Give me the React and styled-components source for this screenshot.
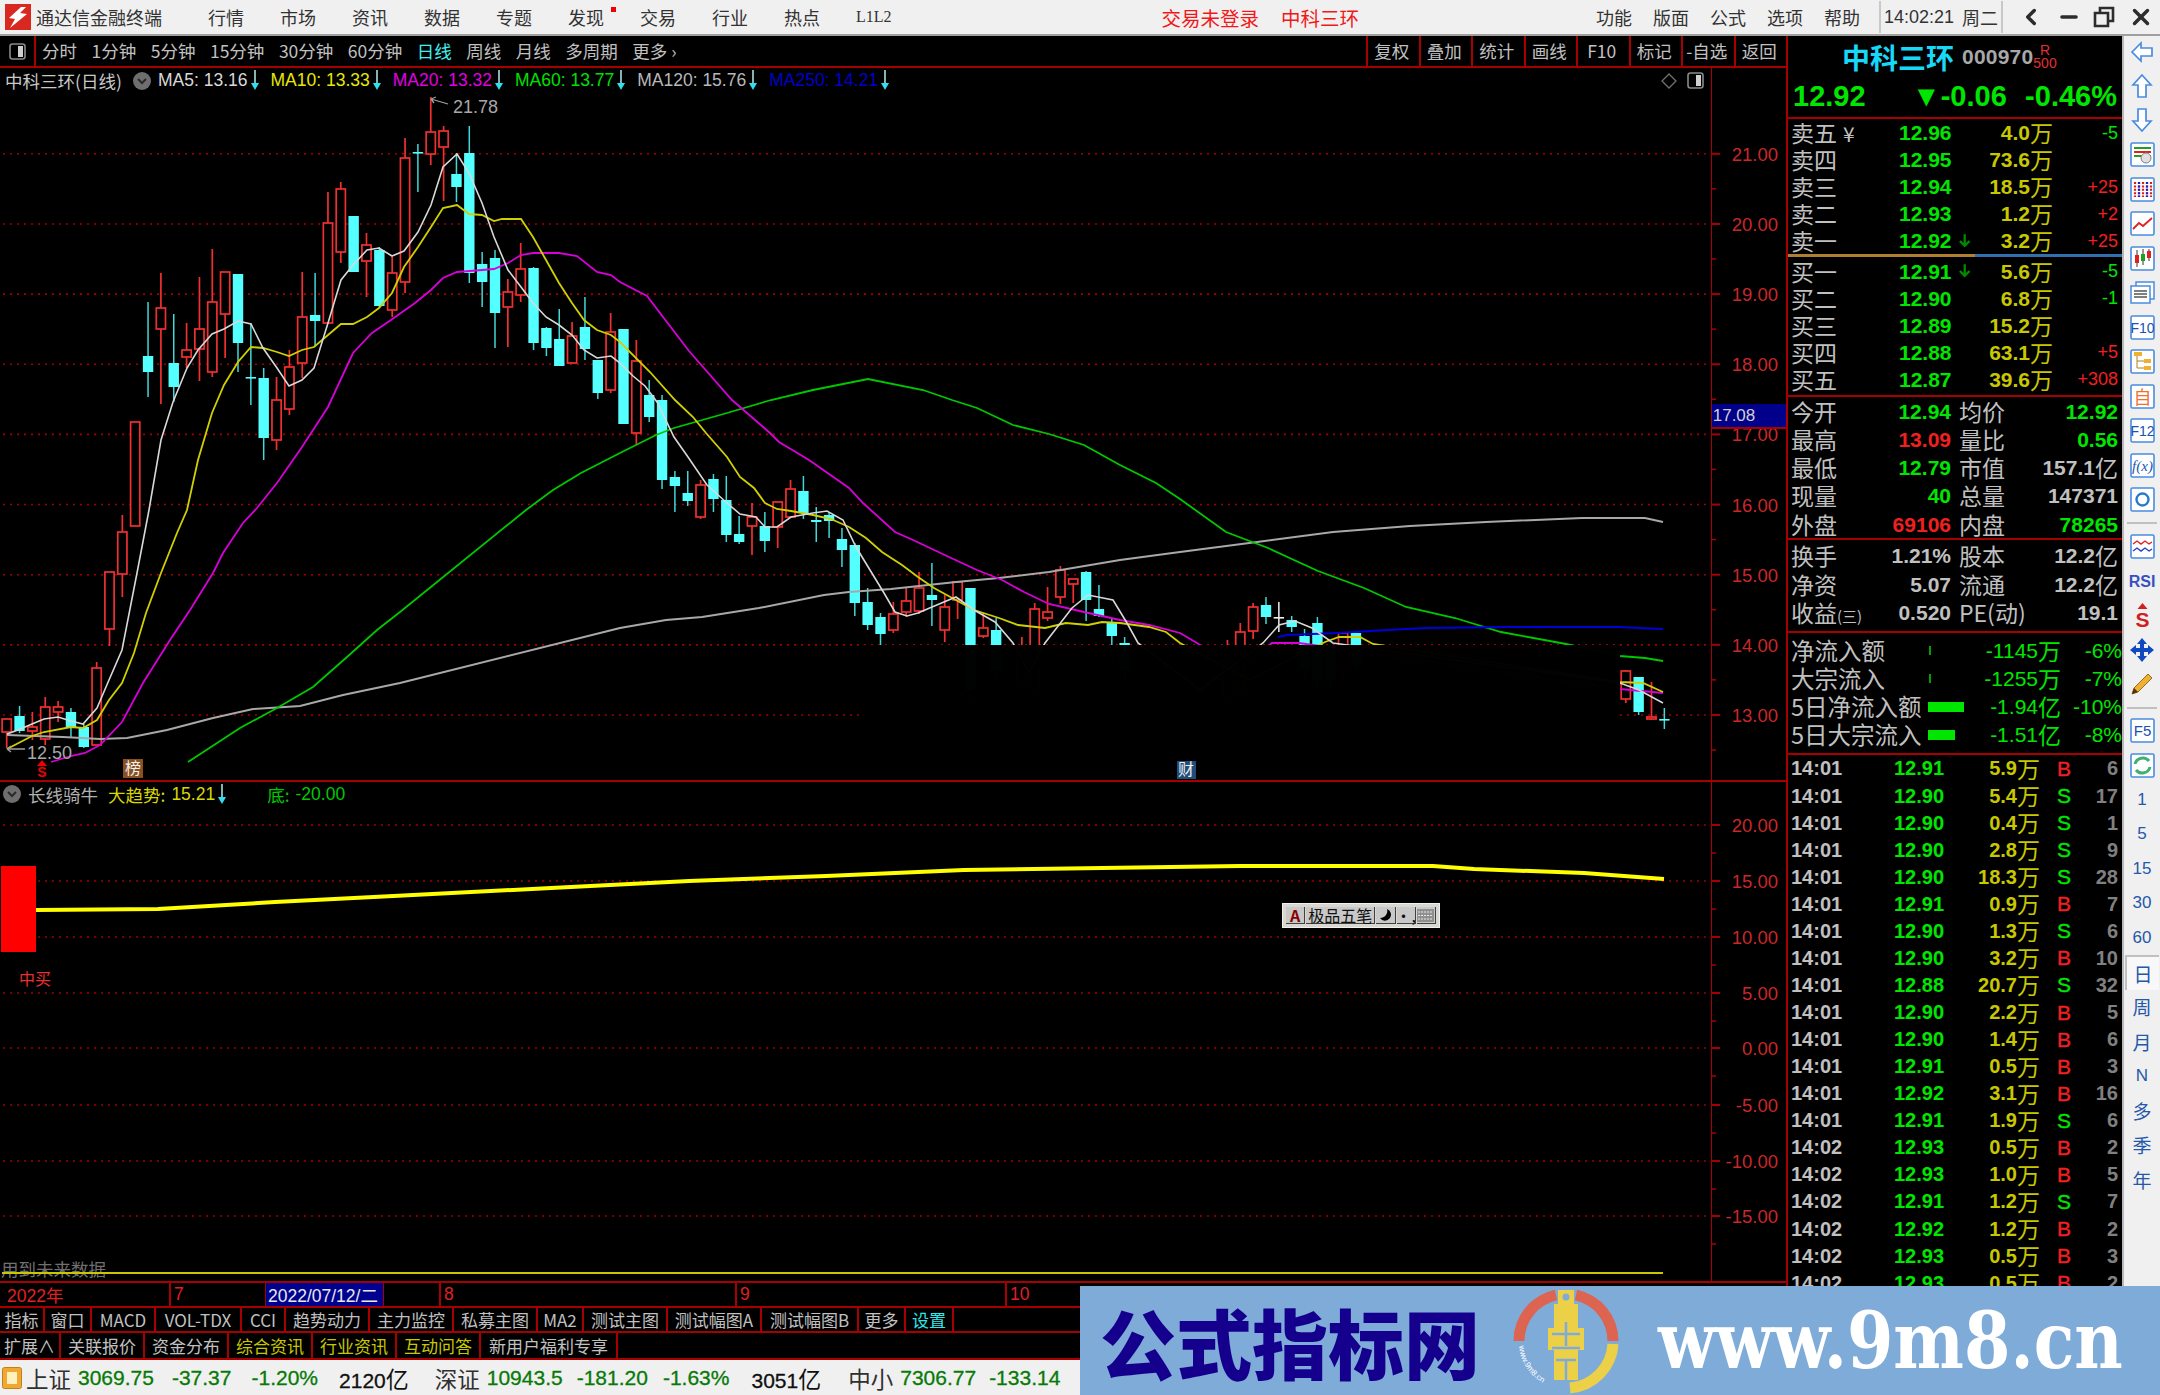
import React from 'react'
import styled, { createGlobalStyle } from 'styled-components'
import { ChevronLeft, Minus, X } from 'lucide-react'

const CJK = `"Noto Sans CJK SC", "Liberation Sans", sans-serif`
const NUM = `"Liberation Sans", "Noto Sans CJK SC", sans-serif`
const RED = '#a80000'
const GREEN = '#00e600'
const GRAY = '#c0c0c0'
const YELLOW = '#c8c800'

// [index, colour, wickTop, bodyTop, bodyBottom, wickBottom]
const candles = [
  [0, 'r', 719, 719, 732, 748], [1, 'c', 706, 716, 731, 733], [2, 'r', 712, 727, 731, 740], [3, 'r', 697, 707, 739, 745],
  [4, 'r', 701, 707, 712, 722], [5, 'c', 708, 712, 727, 738], [6, 'c', 724, 727, 747, 748], [7, 'r', 662, 668, 745, 745],
  [8, 'r', 572, 572, 629, 646], [9, 'r', 515, 532, 574, 597], [10, 'r', 422, 422, 526, 526], [11, 'c', 302, 356, 372, 397],
  [12, 'r', 273, 308, 329, 404], [13, 'c', 314, 363, 387, 402], [14, 'r', 323, 350, 357, 368], [15, 'r', 277, 329, 349, 381],
  [16, 'r', 249, 302, 372, 377], [17, 'r', 272, 272, 314, 358], [18, 'c', 274, 274, 343, 372], [19, 'c', 323, 377, 378, 405],
  [20, 'c', 368, 378, 438, 460], [21, 'r', 377, 400, 440, 450], [22, 'r', 350, 367, 409, 415], [23, 'r', 272, 317, 363, 378],
  [24, 'c', 273, 315, 321, 347], [25, 'r', 192, 223, 323, 323], [26, 'r', 182, 189, 252, 263], [27, 'c', 216, 216, 272, 272],
  [28, 'r', 233, 245, 261, 297], [29, 'c', 247, 250, 306, 307], [30, 'r', 257, 273, 310, 317], [31, 'r', 138, 158, 282, 293],
  [32, 'c', 144, 152, 153, 192], [33, 'r', 97, 132, 154, 165], [34, 'r', 126, 131, 147, 201], [35, 'c', 153, 174, 187, 202],
  [36, 'c', 126, 153, 273, 283], [37, 'c', 252, 264, 282, 307], [38, 'c', 250, 258, 313, 348], [39, 'r', 279, 292, 307, 347],
  [40, 'r', 243, 269, 295, 302], [41, 'c', 267, 268, 343, 350], [42, 'c', 327, 328, 348, 356], [43, 'c', 309, 339, 366, 366],
  [44, 'r', 322, 336, 363, 363], [45, 'c', 297, 327, 349, 360], [46, 'c', 360, 360, 393, 399], [47, 'r', 313, 332, 390, 393],
  [48, 'c', 329, 329, 424, 424], [49, 'r', 340, 361, 433, 445], [50, 'c', 380, 395, 417, 422], [51, 'c', 395, 400, 480, 489],
  [52, 'c', 471, 477, 486, 512], [53, 'c', 471, 493, 501, 506], [54, 'r', 480, 485, 517, 519], [55, 'c', 474, 479, 499, 512],
  [56, 'c', 476, 500, 535, 542], [57, 'c', 516, 534, 542, 544], [58, 'r', 503, 517, 526, 555], [59, 'c', 512, 526, 541, 552],
  [60, 'r', 502, 502, 527, 548], [61, 'r', 480, 489, 517, 517], [62, 'c', 476, 491, 513, 519], [63, 'c', 507, 520, 522, 542],
  [64, 'c', 512, 515, 521, 538], [65, 'c', 528, 539, 550, 567], [66, 'c', 543, 545, 603, 616], [67, 'c', 588, 602, 625, 630],
  [68, 'c', 613, 617, 634, 660], [69, 'r', 602, 614, 630, 633], [70, 'r', 588, 601, 612, 617], [71, 'r', 572, 588, 611, 614],
  [72, 'c', 563, 595, 600, 626], [73, 'r', 595, 607, 630, 642], [74, 'r', 582, 582, 600, 619], [75, 'c', 588, 588, 690, 700],
  [76, 'r', 613, 628, 636, 638], [77, 'c', 618, 630, 670, 680], [79, 'r', 637, 650, 680, 690], [80, 'r', 603, 609, 690, 700],
  [81, 'r', 587, 612, 618, 621], [82, 'r', 566, 570, 597, 604], [83, 'r', 579, 579, 584, 603], [84, 'c', 571, 572, 600, 621],
  [85, 'c', 585, 609, 616, 617], [86, 'c', 618, 622, 636, 660], [87, 'c', 637, 643, 670, 680], [95, 'r', 640, 660, 700, 710],
  [96, 'r', 623, 632, 690, 700], [97, 'r', 603, 607, 631, 639], [98, 'c', 597, 605, 617, 624], [99, 'w', 602, 617, 618, 632],
  [100, 'c', 616, 620, 627, 632], [101, 'c', 629, 636, 670, 680], [102, 'c', 617, 623, 680, 690], [103, 'c', 650, 650, 680, 690],
  [104, 'r', 633, 633, 670, 680], [105, 'c', 633, 633, 665, 675], [126, 'r', 670, 671, 699, 703], [127, 'c', 677, 677, 712, 715],
  [128, 'r', 682, 717, 719, 720], [129, 'c', 708, 719, 720, 729],
]

const ma5 = [[7, 734], [18, 730], [32, 724], [44, 719], [58, 717], [71, 721], [83, 724], [97, 708], [109, 680], [122, 650], [137, 573], [149, 510], [161, 440], [173, 402], [187, 368], [198, 350], [212, 334], [224, 329], [238, 321], [251, 324], [263, 348], [277, 368], [289, 386], [302, 380], [314, 368], [328, 323], [341, 280], [353, 265], [367, 250], [379, 248], [392, 256], [404, 251], [418, 232], [431, 205], [443, 167], [457, 154], [469, 173], [482, 203], [494, 237], [508, 270], [521, 287], [533, 303], [546, 317], [559, 325], [572, 335], [584, 350], [597, 358], [611, 356], [620, 363], [633, 376], [645, 386], [657, 402], [674, 437], [688, 457], [707, 485], [727, 503], [740, 514], [756, 517], [765, 527], [777, 527], [791, 517], [813, 513], [827, 511], [843, 520], [856, 547], [870, 570], [884, 593], [895, 612], [907, 616], [918, 613], [932, 607], [956, 597], [974, 610], [995, 622], [1013, 643], [1029, 672], [1045, 643], [1072, 608], [1088, 595], [1113, 600], [1127, 623], [1138, 643], [1200, 690], [1263, 643], [1279, 625], [1295, 621], [1312, 628], [1333, 643], [1620, 683], [1639, 690], [1663, 703]]
const ma10 = [[7, 749], [32, 736], [44, 732], [71, 727], [83, 728], [97, 720], [109, 700], [122, 683], [134, 653], [146, 613], [161, 573], [177, 533], [187, 510], [198, 460], [212, 413], [224, 385], [238, 362], [251, 347], [263, 348], [277, 352], [289, 356], [302, 350], [314, 347], [328, 335], [341, 324], [353, 324], [367, 317], [379, 308], [392, 293], [404, 267], [418, 247], [431, 227], [443, 208], [457, 205], [469, 214], [482, 215], [494, 221], [502, 219], [521, 219], [533, 237], [546, 260], [559, 283], [572, 303], [584, 320], [597, 330], [611, 335], [620, 342], [650, 372], [675, 400], [693, 417], [706, 433], [727, 457], [740, 477], [754, 488], [765, 503], [777, 509], [791, 511], [813, 515], [831, 519], [849, 527], [866, 538], [882, 552], [902, 565], [918, 577], [934, 588], [954, 599], [974, 610], [999, 618], [1018, 625], [1045, 628], [1066, 623], [1088, 625], [1102, 622], [1120, 623], [1149, 627], [1166, 632], [1180, 643], [1250, 680], [1325, 642], [1339, 637], [1360, 637], [1373, 644], [1620, 682], [1643, 683], [1663, 692]]
const ma20 = [[51, 762], [71, 756], [85, 753], [100, 745], [122, 722], [143, 683], [170, 640], [190, 610], [213, 573], [223, 553], [243, 523], [257, 508], [277, 483], [302, 447], [328, 407], [353, 353], [372, 333], [391, 320], [415, 303], [431, 290], [443, 278], [457, 272], [482, 270], [494, 269], [508, 263], [521, 255], [533, 253], [559, 253], [577, 256], [597, 272], [611, 275], [620, 282], [647, 296], [689, 351], [732, 400], [770, 433], [779, 442], [809, 460], [849, 488], [863, 503], [895, 532], [913, 540], [949, 557], [977, 570], [1002, 580], [1024, 592], [1049, 604], [1084, 612], [1120, 620], [1149, 625], [1180, 633], [1197, 643], [1235, 670], [1272, 643], [1299, 643], [1620, 689], [1663, 693]]
const ma60 = [[188, 762], [240, 728], [277, 708], [313, 687], [347, 657], [377, 630], [400, 612], [526, 510], [553, 490], [581, 473], [620, 453], [656, 435], [674, 428], [727, 413], [771, 400], [813, 390], [868, 379], [923, 390], [952, 400], [977, 408], [1013, 425], [1049, 434], [1084, 445], [1120, 465], [1156, 483], [1180, 499], [1226, 532], [1268, 548], [1318, 571], [1364, 588], [1406, 607], [1455, 618], [1501, 632], [1566, 644], [1620, 656], [1645, 658], [1663, 661]]
const ma120 = [[7, 735], [63, 737], [100, 739], [127, 738], [167, 730], [213, 718], [253, 709], [300, 706], [343, 695], [400, 683], [620, 628], [666, 620], [702, 617], [759, 608], [824, 595], [849, 592], [891, 589], [956, 582], [999, 578], [1049, 572], [1120, 560], [1180, 552], [1257, 542], [1333, 532], [1410, 526], [1486, 522], [1582, 518], [1645, 518], [1663, 522]]
const ma250 = [[1278, 637], [1287, 635], [1337, 633], [1387, 630], [1427, 628], [1505, 627], [1618, 627], [1663, 629]]
const trend = [[36, 910], [158, 909], [275, 902], [413, 895], [551, 888], [689, 881], [826, 876], [964, 870], [1102, 868], [1240, 866], [1433, 866], [1474, 869], [1584, 873], [1664, 879]]

const priceTicks = [21, 20, 19, 18, 17, 16, 15, 14, 13]
const priceY = p => 715 - (p - 13) * 70.15
const lowerTicks = [['20.00', 825], ['15.00', 881], ['10.00', 937], ['5.00', 993], ['0.00', 1048], ['-5.00', 1105], ['-10.00', 1161], ['-15.00', 1216]]

const GlobalStyle = createGlobalStyle`
  html, body { margin: 0; padding: 0; background: #000; }
  * { box-sizing: border-box; }
`

const SPage = styled.div`
  position: relative;
  width: 2160px;
  height: 1395px;
  overflow: hidden;
  display: flex;
  flex-direction: column;
  background: #000;
  font-family: ${CJK};
`

/* title bar */
const STitleBar = styled.div`
  height: 36px;
  flex: none;
  display: flex;
  align-items: center;
  background: #f0f0f0;
  border-bottom: 2px solid #a0a0a0;
  color: #333;
  font-size: 18px;
`
const SLogo = styled.svg`
  width: 26px;
  height: 26px;
  margin: 0 5px 0 5px;
  flex: none;
`
const SAppName = styled.div`
  width: 172px;
`
const SMenu = styled.div`
  display: flex;
  align-items: center;
  gap: ${p => p.$gap}px;
  margin-right: ${p => p.$mr || 0}px;
  margin-left: ${p => (p.$auto ? 'auto' : '0')};
`
const SMenuItem = styled.span`
  position: relative;
  white-space: nowrap;
  font-family: ${p => (p.$mono ? '"Liberation Serif", serif' : CJK)};
  font-size: ${p => (p.$mono ? 16 : 18)}px;
`
const SDot = styled.i`
  position: absolute;
  right: -12px;
  top: 3px;
  width: 5px;
  height: 5px;
  background: #f00000;
`
const SAlert = styled.div`
  margin-left: ${p => p.$ml}px;
  color: #f01818;
  font-size: 19.5px;
  white-space: nowrap;
`
const SClock = styled.div`
  width: 124px;
  height: 32px;
  display: flex;
  align-items: center;
  justify-content: space-between;
  padding: 0 3px;
  border-left: 2px solid #c8c8c8;
  border-right: 2px solid #c8c8c8;
  font-size: 18px;
  font-family: ${NUM};
`
const SWinButtons = styled.div`
  width: 157px;
  display: flex;
  align-items: center;
  justify-content: space-between;
  padding: 0 6px 0 15px;
  color: #2c2c2c;
`

/* main body */
const SBody = styled.div`
  height: 1324px;
  flex: none;
  display: flex;
`
const SLeftColumn = styled.div`
  width: 1786px;
  flex: none;
  display: flex;
  flex-direction: column;
`
const SToolbar = styled.div`
  height: 32px;
  flex: none;
  display: flex;
  align-items: center;
  border-bottom: 2px solid ${RED};
  color: ${GRAY};
  font-size: 17.5px;
`
const SPaneToggle = styled.div`
  width: 36px;
  height: 100%;
  display: flex;
  align-items: center;
  justify-content: center;
  border-right: 2px solid ${RED};
`
const SPeriods = styled.div`
  display: flex;
  gap: 14.5px;
  margin: 0 0 2px 6px;
`
const SPeriod = styled.span`
  color: ${p => (p.$active ? '#40f0f0' : GRAY)};
  white-space: nowrap;
`
const SToolButtons = styled.div`
  margin-left: auto;
  display: flex;
  height: 100%;
`
const SToolButton = styled.div`
  width: 52.5px;
  display: flex;
  align-items: center;
  justify-content: center;
  padding: 0 3px 2px 0;
  border-left: 2px solid ${RED};
  font-size: 17.5px;
`
const SPricePane = styled.div`
  height: 714px;
  flex: none;
  display: flex;
  border-bottom: 2px solid ${RED};
`
const SLowerPane = styled.div`
  height: 501px;
  flex: none;
  display: flex;
  border-bottom: 2px solid ${RED};
`
const SChartColumn = styled.div`
  width: 1711px;
  flex: none;
  display: flex;
  flex-direction: column;
`
const SChart = styled.svg`
  display: block;
  width: 1711px;
  flex: none;
`
const SAxis = styled.svg`
  display: block;
  width: 75px;
  flex: none;
`
const SLegend = styled.div`
  height: 25px;
  flex: none;
  display: flex;
  align-items: center;
  padding-left: 5px;
  font-family: ${NUM};
  font-size: 17.5px;
`
const SLegendTitle = styled.span`
  width: 128px;
  color: #c8c8c8;
  font-family: ${CJK};
  white-space: nowrap;
`
const SLegendToggle = styled.span`
  display: flex;
  margin-right: 7px;
`
const SLegendValue = styled.span`
  display: inline-flex;
  align-items: center;
  gap: 2px;
  margin-right: ${p => p.$mr || 11}px;
  color: ${p => p.$color};
  white-space: nowrap;
`
const SValueName = styled.span`
  font-family: ${CJK};
  font-size: 17.5px;
  margin-right: 4px;
`
const SLegendEnd = styled.div`
  margin-left: auto;
  display: flex;
  align-items: center;
  gap: 10px;
  padding-right: 7px;
`
const SLowerHeader = styled(SLegend)`
  height: 24px;
  padding-left: 3px;
  gap: 7px;
`
const SLowerName = styled.span`
  margin-right: 3px;
  color: #b0b0b0;
  font-family: ${CJK};
`
const SDateAxis = styled.div`
  height: 23px;
  flex: none;
  display: flex;
  font-size: 17.5px;
  font-family: ${NUM};
`
const SDateCell = styled.div`
  width: ${p => p.$w}px;
  display: flex;
  align-items: center;
  padding-left: ${p => p.$pl || 3}px;
  border-right: 2px solid ${p => (p.$line ? RED : 'transparent')};
  background: ${p => (p.$box ? '#000090' : 'transparent')};
  color: ${p => (p.$box ? '#e8e8e8' : '#e02020')};
  outline: ${p => (p.$box ? `1px solid ${RED}` : 'none')};
  white-space: nowrap;
`
const STabRow = styled.div`
  height: ${p => p.$h}px;
  flex: none;
  display: flex;
  border-top: 2px solid ${RED};
  border-bottom: ${p => (p.$last ? `2px solid ${RED}` : 'none')};
`
const STab = styled.div`
  width: ${p => p.$w}px;
  flex: none;
  display: flex;
  align-items: center;
  justify-content: center;
  border-right: 2px solid ${RED};
  color: ${p => p.$color || GRAY};
  font-size: 17px;
  white-space: nowrap;
`

/* quote panel */
const SPanel = styled.div`
  width: 336px;
  flex: none;
  overflow: hidden;
  border-left: 2px solid ${RED};
  color: ${GRAY};
`
const SSection = styled.div`
  border-bottom: 2px solid ${RED};
  padding-top: ${p => p.$pt || 0}px;
  padding-bottom: ${p => p.$pb || 0}px;
`
const SHead = styled.div`
  height: 83px;
  border-bottom: 2px solid ${RED};
`
const SNameRow = styled.div`
  height: 42px;
  display: flex;
  align-items: center;
  padding-left: 54px;
`
const SStockName = styled.span`
  width: 120px;
  color: #18d8f8;
  font-size: 28px;
  font-weight: 700;
  white-space: nowrap;
`
const SStockCode = styled.span`
  width: 71px;
  color: #a8a8a8;
  font-family: ${NUM};
  font-size: 21px;
  font-weight: 700;
  letter-spacing: 0.2px;
`
const SIndexTag = styled.span`
  display: flex;
  flex-direction: column;
  align-items: center;
  color: #e03030;
  font-family: ${NUM};
  font-size: 14px;
  line-height: 13px;
  width: 24px;
`
const SPriceRow = styled.div`
  height: 37px;
  display: grid;
  grid-template-columns: 119px 90px 115px;
  align-items: center;
  padding-left: 5px;
  color: ${GREEN};
  font-family: ${NUM};
  font-size: 29px;
  font-weight: 700;
`
const SChange = styled.span`
  text-align: right;
  white-space: nowrap;
`
const SBookRow = styled.div`
  height: 27.1px;
  display: grid;
  grid-template-columns: 108px 72px 82px 65px;
  align-items: center;
  padding-left: 3px;
`
const SLabel = styled.span`
  color: ${GRAY};
  font-family: ${CJK};
  font-size: ${p => p.$size || 23}px;
  line-height: 1;
  white-space: nowrap;
`
const SLabelSmall = styled.span`
  font-size: 15px;
`
const SYuan = styled.span`
  margin-left: 6px;
  font-size: 21px;
`
const SNum = styled.span`
  display: flex;
  align-items: center;
  justify-content: ${p => (p.$right ? 'flex-end' : 'flex-start')};
  color: ${p => p.$color || GRAY};
  font-family: ${NUM};
  font-size: ${p => p.$size || 21}px;
  font-weight: ${p => p.$weight || 700};
  line-height: 1;
  white-space: nowrap;
`
const SUnit = styled.span`
  font-family: ${CJK};
  font-size: 23px;
  font-weight: 400;
  line-height: 1;
`
const SMiniArrow = styled.svg`
  margin-left: 6px;
  width: 14px;
  height: 16px;
`
const SBookDivider = styled.div`
  height: 3px;
  background: linear-gradient(to right, #b08030 0, #b08030 187px, #3070b0 187px, #3070b0 100%);
`
const SStatRow = styled.div`
  height: ${p => p.$h}px;
  display: grid;
  grid-template-columns: 160px 159px;
  column-gap: 8px;
  align-items: center;
  padding-left: 3px;
`
const SStatCell = styled.div`
  display: flex;
  align-items: center;
  justify-content: space-between;
`
const SFlowRow = styled.div`
  height: 28px;
  display: grid;
  grid-template-columns: 137px 46px 87px 61px;
  align-items: center;
  padding-left: 3px;
`
const SFlowBar = styled.div`
  height: ${p => (p.$w > 2 ? 10 : 9)}px;
  width: ${p => p.$w}px;
  background: ${p => (p.$w > 2 ? '#00e600' : '#00a000')};
  margin-left: ${p => (p.$w > 2 ? 0 : 1)}px;
`
const STickRow = styled.div`
  height: 27.07px;
  display: grid;
  grid-template-columns: 103px 70px 76px 48px 30px;
  align-items: center;
  padding-left: 3px;
`
const SSide = styled.span`
  text-align: center;
  color: ${p => (p.$buy ? '#f02020' : GREEN)};
  font-family: ${NUM};
  font-size: 21px;
  line-height: 1;
  -webkit-text-stroke: 0.4px currentColor;
`

/* right icon strip */
const SSideBar = styled.div`
  flex: 1;
  display: flex;
  flex-direction: column;
  align-items: center;
  background: #f0f0f0;
  border-left: 2px solid #b8b8b8;
  color: #2558a8;
`
const SSideItem = styled.div`
  flex: none;
  width: 100%;
  height: 34.5px;
  display: flex;
  align-items: center;
  justify-content: center;
  font-family: ${NUM};
  font-size: ${p => (p.$cjk ? 19 : 17)}px;
  &:first-child { height: 32.5px; }
`
const SSidePressed = styled(SSideItem)`
  width: 34px;
  background: #f8f8f8;
  border-top: 2px solid #c0c0c0;
  border-left: 2px solid #c0c0c0;
`
const SSideRule = styled.div`
  flex: none;
  width: 30px;
  height: 12px;
  display: flex;
  align-items: center;
  &::after { content: ''; width: 100%; height: 2px; background: #c0c0c0; }
`

/* status bar */
const SStatusBar = styled.div`
  height: 35px;
  flex: none;
  display: flex;
  align-items: center;
  background: #f0f0f0;
  padding-left: 2px;
  font-family: ${NUM};
  font-size: 21px;
`
const SStatusIcon = styled.svg`
  width: 20px;
  height: 22px;
  flex: none;
`
const SStatusName = styled.span`
  margin-left: ${p => p.$ml}px;
  margin-right: 7px;
  color: #303030;
  font-family: ${CJK};
  font-size: 22.5px;
  white-space: nowrap;
`
const SStatusValue = styled.span`
  margin-left: ${p => p.$ml || 0}px;
  color: ${p => p.$color || '#087a08'};
  white-space: nowrap;
  -webkit-text-stroke: 0.3px currentColor;
`
const SStatusUnit = styled.span`
  font-family: ${CJK};
  font-size: 23px;
  -webkit-text-stroke: 0;
`

/* things lying over the page */
const SImeBar = styled.div`
  position: absolute;
  left: 1282px;
  top: 903px;
  width: 158px;
  height: 25px;
  display: flex;
  gap: 1px;
  padding: 3px;
  background: #d8d8d0;
  border: 1px solid #f0f0f0;
  color: #101010;
  font-size: 16px;
`
const SImeKey = styled.div`
  width: ${p => p.$w}px;
  display: flex;
  align-items: center;
  justify-content: center;
  background: #c8c8c8;
  border-right: 1px solid #404040;
  border-bottom: 1px solid #404040;
  color: ${p => p.$color || '#101010'};
  font-weight: ${p => (p.$bold ? 700 : 400)};
  white-space: nowrap;
`
const SBanner = styled.div`
  position: absolute;
  left: 1080px;
  top: 1286px;
  width: 1080px;
  height: 109px;
  display: flex;
  align-items: center;
  background: #7fabd9;
`
const SBannerTitle = styled.div`
  width: 433px;
  flex: none;
  padding-left: 20px;
  color: #14008c;
  font-size: 76px;
  font-weight: 900;
  line-height: 1;
  white-space: nowrap;
`
const SBannerLogo = styled.svg`
  width: 106px;
  height: 106px;
  flex: none;
`
const SBannerUrl = styled.div`
  margin-left: 39px;
  flex: none;
  color: #fff;
  font-family: "DejaVu Serif", serif;
  font-size: 79px;
  font-weight: 700;
  line-height: 1;
  white-space: nowrap;
  transform: scaleX(0.845);
  transform-origin: left center;
`

const pts = arr => arr.map(p => p.join(',')).join(' ')
const cx = i => 6.7 + 12.85 * i

const Arrow = () => (
  <svg width="10" height="21" viewBox="0 0 10 21">
    <path d="M5 0V15" stroke="#c0ffff" strokeWidth="1.4" />
    <path d="M1 13H9L5 20Z" fill="#30e0f0" />
  </svg>
)

const MiniArrow = () => (
  <SMiniArrow viewBox="0 0 14 16">
    <path d="M7 1V12M2 8L7 13L12 8" stroke="#008a00" strokeWidth="2.4" fill="none" />
  </SMiniArrow>
)

const Chevron = () => (
  <svg width="18" height="18" viewBox="0 0 18 18">
    <circle cx="9" cy="9" r="9" fill="#6e6e6e" />
    <path d="M5 7L9 11L13 7" stroke="#2a2a2a" strokeWidth="2" fill="none" />
  </svg>
)

const PanelGlyph = () => (
  <svg width="17" height="17" viewBox="0 0 17 17">
    <rect x="1" y="1" width="15" height="15" rx="2.5" fill="none" stroke="#8a8a8a" strokeWidth="1.6" />
    <rect x="9" y="3" width="5" height="11" fill="#d0d0d0" />
  </svg>
)

const Candle = ({ i, kind, wt, bt, bb, wb }) => {
  const x = cx(i)
  if (kind === 'r') {
    return (
      <g stroke="#f03030" strokeWidth="1.7" fill="#000">
        <path d={`M${x} ${wt}V${bt}M${x} ${bb}V${wb}`} />
        <rect x={x - 4.6} y={bt} width="9.2" height={Math.max(bb - bt, 1.5)} />
      </g>
    )
  }
  const colour = kind === 'w' ? '#f0f0f0' : '#54ffff'
  return (
    <g>
      <path d={`M${x} ${wt}V${wb}`} stroke={kind === 'w' ? colour : '#40d8d8'} strokeWidth="1.5" />
      <rect x={x - 5.2} y={bt} width="10.4" height={Math.max(bb - bt, 1.6)} fill={colour} />
    </g>
  )
}

const PriceChart = () => (
  <SChart viewBox="0 93 1711 687" height="687">
    {priceTicks.map(p => (
      <path key={p} d={`M3 ${priceY(p)}H1711`} stroke="#a00000" strokeWidth="1.6" strokeDasharray="2 5" />
    ))}
    {candles.map(([i, kind, wt, bt, bb, wb]) => (
      <Candle key={i} i={i} kind={kind} wt={wt} bt={bt} bb={bb} wb={wb} />
    ))}
    <polyline points={pts(ma120)} fill="none" stroke="#a8a8a8" strokeWidth="2" />
    <polyline points={pts(ma60)} fill="none" stroke="#00c800" strokeWidth="1.8" />
    <polyline points={pts(ma250)} fill="none" stroke="#0000d8" strokeWidth="2" />
    <polyline points={pts(ma20)} fill="none" stroke="#d800d8" strokeWidth="1.8" />
    <polyline points={pts(ma10)} fill="none" stroke="#d0d000" strokeWidth="1.8" />
    <polyline points={pts(ma5)} fill="none" stroke="#d8d8d8" strokeWidth="1.6" />
    {/* the middle of the chart is blacked out below 14.00 */}
    <rect x="860" y="645" width="760" height="135" fill="#000" fillOpacity="0.99" />
    <path d="M431 99L448 104M431 99l5 -2M431 99l3 4" stroke="#a0a0a0" strokeWidth="1.3" fill="none" />
    <text x="453" y="113" fill="#a8a8a8" fontFamily={NUM} fontSize="18">21.78</text>
    <path d="M7 749H25M7 749l4 -3M7 749l4 3" stroke="#a0a0a0" strokeWidth="1.3" fill="none" />
    <text x="27" y="759" fill="#a8a8a8" fontFamily={NUM} fontSize="18">12.50</text>
    <path d="M42 760l-5 6h10z" fill="#f00000" />
    <text x="42" y="777" fill="#f00000" fontFamily={NUM} fontSize="14" fontWeight="700" textAnchor="middle">S</text>
    <rect x="123" y="759" width="20" height="19" fill="#8a5020" />
    <text x="133" y="774" fill="#f0f0f0" fontFamily={CJK} fontSize="16" textAnchor="middle">榜</text>
    <rect x="1177" y="761" width="19" height="18" fill="#204c78" />
    <text x="1186" y="775" fill="#f0f0f0" fontFamily={CJK} fontSize="16" textAnchor="middle">财</text>
  </SChart>
)

const PriceAxis = () => (
  <SAxis viewBox="1711 68 75 712" height="712">
    <path d="M1711 68V780" stroke={RED} strokeWidth="2" />
    {priceTicks.map(p => (
      <g key={p}>
        <path d={`M1711 ${priceY(p)}H1720`} stroke={RED} strokeWidth="2" />
        <path d={`M1711 ${priceY(p) + 35}H1716`} stroke={RED} strokeWidth="1.5" />
        <text x="1778" y={priceY(p) + 7} textAnchor="end" fill="#c82828" fontFamily={NUM} fontSize="18.5">{p}.00</text>
      </g>
    ))}
    <rect x="1712" y="404" width="74" height="23" fill="#00008a" />
    <path d="M1712 428H1786" stroke={RED} strokeWidth="2" />
    <text x="1734" y="421" textAnchor="middle" fill="#d0d0d0" fontFamily={NUM} fontSize="17">17.08</text>
  </SAxis>
)

const LowerChart = () => (
  <SChart viewBox="0 806 1711 475" height="475">
    {lowerTicks.map(([label, y]) => (
      <path key={label} d={`M3 ${y}H1711`} stroke="#a00000" strokeWidth="1.6" strokeDasharray="2 5" />
    ))}
    <rect x="1" y="866" width="35" height="86" fill="#ff0000" />
    <polyline points={pts(trend)} fill="none" stroke="#ffff00" strokeWidth="4" />
    <text x="35" y="985" textAnchor="middle" fill="#e83030" fontFamily={CJK} fontSize="16">中买</text>
    <text x="1" y="1276" fill="#707070" fontFamily={CJK} fontSize="17.5">用到未来数据</text>
    <path d="M2 1273H1663" stroke="#c8c800" strokeWidth="2" />
  </SChart>
)

const LowerAxis = () => (
  <SAxis viewBox="1711 782 75 499" height="499">
    <path d="M1711 782V1281" stroke={RED} strokeWidth="2" />
    {lowerTicks.map(([label, y]) => (
      <g key={label}>
        <path d={`M1711 ${y}H1720`} stroke={RED} strokeWidth="2" />
        <path d={`M1711 ${y + 28}H1716`} stroke={RED} strokeWidth="1.5" />
        <text x="1778" y={y + 7} textAnchor="end" fill="#c82828" fontFamily={NUM} fontSize="18.5">{label}</text>
      </g>
    ))}
  </SAxis>
)

const Frame = ({ children }) => (
  <svg width="25" height="25" viewBox="0 0 25 25">
    <rect x="1" y="1" width="23" height="23" rx="1.5" fill="#fff" stroke="#4a8ce0" strokeWidth="1.6" />
    {children}
  </svg>
)
const Bars = ({ colour, y }) => <path d={`M4 ${y}h17`} stroke={colour} strokeWidth="2" />

const sideIcons = [
  <svg width="24" height="24" viewBox="0 0 24 24"><path d="M2 12L11 3V8H22V16H11V21Z" fill="#fff" stroke="#4a8ce0" strokeWidth="1.7" /></svg>,
  <svg width="24" height="24" viewBox="0 0 24 24"><path d="M12 1L21 11H16V23H8V11H3Z" fill="#fff" stroke="#4a8ce0" strokeWidth="1.7" /></svg>,
  <svg width="24" height="24" viewBox="0 0 24 24"><path d="M12 23L21 13H16V1H8V13H3Z" fill="#fff" stroke="#4a8ce0" strokeWidth="1.7" /></svg>,
  <Frame><Bars colour="#20a020" y="6" /><Bars colour="#e02020" y="10" /><Bars colour="#20a020" y="14" /><circle cx="16" cy="16" r="5" fill="#e0e0e0" stroke="#808080" /></Frame>,
  <Frame><path d="M5 5v15M9 5v15M13 5v15M17 5v15M21 5v15" stroke="#d02020" strokeWidth="2.2" strokeDasharray="2 1.4" /><path d="M9 5v15M17 5v15" stroke="#2020c0" strokeWidth="2.2" strokeDasharray="2 1.4" /></Frame>,
  <Frame><path d="M3 18L9 12L13 15L22 7" stroke="#e02020" strokeWidth="1.8" fill="none" /></Frame>,
  <Frame><path d="M7 4V21M13 3V19M19 3V15" stroke="#333" /><rect x="5" y="9" width="4" height="8" fill="#e02020" /><rect x="11" y="8" width="4" height="7" fill="#20a020" /><rect x="17" y="5" width="4" height="7" fill="#e02020" /></Frame>,
  <svg width="25" height="25" viewBox="0 0 25 25"><rect x="6" y="2" width="18" height="17" fill="#fff" stroke="#4a8ce0" strokeWidth="1.5" /><rect x="1" y="6" width="19" height="17" fill="#fff" stroke="#4a8ce0" strokeWidth="1.5" /><path d="M4 11h13M4 14h13M4 17h13" stroke="#555" strokeWidth="1.5" /></svg>,
  <Frame><text x="12.5" y="18" textAnchor="middle" fill="#2050b0" fontFamily={NUM} fontSize="14">F10</text></Frame>,
  <Frame><path d="M7 5V19H15M7 12H15" stroke="#b08020" fill="none" /><rect x="4" y="3" width="8" height="4" fill="#f0b030" /><rect x="14" y="10" width="7" height="4" fill="#f0b030" /><rect x="14" y="17" width="7" height="4" fill="#f0b030" /></Frame>,
  <Frame><text x="12.5" y="20" textAnchor="middle" fill="#f07030" fontFamily={CJK} fontSize="18">自</text></Frame>,
  <Frame><text x="12.5" y="18" textAnchor="middle" fill="#2050b0" fontFamily={NUM} fontSize="14">F12</text></Frame>,
  <Frame><text x="12.5" y="18" textAnchor="middle" fill="#1a5ab0" fontFamily="Liberation Serif" fontStyle="italic" fontSize="15">f(x)</text></Frame>,
  <Frame><circle cx="12.5" cy="12.5" r="6" fill="none" stroke="#2878d0" strokeWidth="2.4" /></Frame>,
  'rule',
  <Frame><path d="M3 10l4 -3 4 3 4 -3 4 3 3 -2" stroke="#e02020" strokeWidth="1.4" fill="none" /><path d="M3 17l4 -3 4 3 4 -3 4 3 3 -2" stroke="#2040d0" strokeWidth="1.4" fill="none" /></Frame>,
  <svg width="32" height="22" viewBox="0 0 32 22"><text x="16" y="17" textAnchor="middle" fill="#3a50c0" fontFamily={NUM} fontSize="16" fontWeight="700">RSI</text></svg>,
  <svg width="25" height="27" viewBox="0 0 25 27"><path d="M12.5 1l-5 6h10z" fill="#d02020" /><text x="12.5" y="25" textAnchor="middle" fill="#d02020" fontFamily={NUM} fontSize="21" fontWeight="700">S</text></svg>,
  <svg width="26" height="26" viewBox="0 0 26 26"><path d="M13 1L18 7H15V11H19V8L25 13L19 18V15H15V19H18L13 25L8 19H11V15H7V18L1 13L7 8V11H11V7H8Z" fill="#1048c0" /></svg>,
  <svg width="26" height="26" viewBox="0 0 26 26"><path d="M19 3L23 7L9 21L3 23L5 17Z" fill="#f0b030" stroke="#907020" /><path d="M3 23L5 17L9 21Z" fill="#503010" /></svg>,
  'rule',
  <Frame><text x="12.5" y="18" textAnchor="middle" fill="#2050b0" fontFamily={NUM} fontSize="15">F5</text></Frame>,
  <Frame><path d="M5 11A8 8 0 0 1 19 8M20 14A8 8 0 0 1 6 17" stroke="#40b070" strokeWidth="3" fill="none" /></Frame>,
]
const sideLabels = ['1', '5', '15', '30', '60', '日', '周', '月', 'N', '多', '季', '年']

const bookSell = [
  ['卖五', '12.96', false, '4.0', '-5', GREEN], ['卖四', '12.95', false, '73.6', '', GREEN], ['卖三', '12.94', false, '18.5', '+25', '#f02020'],
  ['卖二', '12.93', false, '1.2', '+2', '#f02020'], ['卖一', '12.92', true, '3.2', '+25', '#f02020'],
]
const bookBuy = [
  ['买一', '12.91', true, '5.6', '-5', GREEN], ['买二', '12.90', false, '6.8', '-1', GREEN], ['买三', '12.89', false, '15.2', '', GREEN],
  ['买四', '12.88', false, '63.1', '+5', '#f02020'], ['买五', '12.87', false, '39.6', '+308', '#f02020'],
]
const statsA = [
  ['今开', '12.94', GREEN, '均价', '12.92', GREEN], ['最高', '13.09', '#f02020', '量比', '0.56', GREEN], ['最低', '12.79', GREEN, '市值', '157.1', GRAY, '亿'],
  ['现量', '40', GREEN, '总量', '147371', GRAY], ['外盘', '69106', '#f02020', '内盘', '78265', GREEN],
]
const statsB = [
  ['换手', '1.21%', GRAY, '股本', '12.2', GRAY, '亿'], ['净资', '5.07', GRAY, '流通', '12.2', GRAY, '亿'],
  [<>收益<SLabelSmall>(三)</SLabelSmall></>, '0.520', GRAY, 'PE(动)', '19.1', GRAY],
]
const flows = [
  ['净流入额', 2, '-1145', '万', '-6%'], ['大宗流入', 2, '-1255', '万', '-7%'], ['5日净流入额', 36, '-1.94', '亿', '-10%'], ['5日大宗流入', 27, '-1.51', '亿', '-8%'],
]
const ticks = [
  ['14:01', '12.91', '5.9', 'B', '6'], ['14:01', '12.90', '5.4', 'S', '17'], ['14:01', '12.90', '0.4', 'S', '1'], ['14:01', '12.90', '2.8', 'S', '9'],
  ['14:01', '12.90', '18.3', 'S', '28'], ['14:01', '12.91', '0.9', 'B', '7'], ['14:01', '12.90', '1.3', 'S', '6'], ['14:01', '12.90', '3.2', 'B', '10'],
  ['14:01', '12.88', '20.7', 'S', '32'], ['14:01', '12.90', '2.2', 'B', '5'], ['14:01', '12.90', '1.4', 'B', '6'], ['14:01', '12.91', '0.5', 'B', '3'],
  ['14:01', '12.92', '3.1', 'B', '16'], ['14:01', '12.91', '1.9', 'S', '6'], ['14:02', '12.93', '0.5', 'B', '2'], ['14:02', '12.93', '1.0', 'B', '5'],
  ['14:02', '12.91', '1.2', 'S', '7'], ['14:02', '12.92', '1.2', 'B', '2'], ['14:02', '12.93', '0.5', 'B', '3'], ['14:02', '12.93', '0.5', 'B', '2'],
]

const BookRow = ({ row, yuan }) => (
  <SBookRow>
    <SLabel>{row[0]}{yuan && <SYuan>¥</SYuan>}</SLabel>
    <SNum $color={GREEN}>{row[1]}{row[2] && <MiniArrow />}</SNum>
    <SNum $right $color={YELLOW}>{row[3]}<SUnit>万</SUnit></SNum>
    <SNum $right $color={row[5]} $size={18} $weight={400}>{row[4]}</SNum>
  </SBookRow>
)

const StatRow = ({ row, h }) => (
  <SStatRow $h={h}>
    <SStatCell>
      <SLabel>{row[0]}</SLabel>
      <SNum $right $color={row[2]}>{row[1]}</SNum>
    </SStatCell>
    <SStatCell>
      <SLabel>{row[3]}</SLabel>
      <SNum $right $color={row[5]}>{row[4]}{row[6] && <SUnit>{row[6]}</SUnit>}</SNum>
    </SStatCell>
  </SStatRow>
)

const BannerLogo = () => (
  <SBannerLogo viewBox="0 0 106 106">
    <path d="M6 53A47 47 0 0 1 43 7" fill="none" stroke="#dc6450" strokeWidth="11" />
    <path d="M63 7A47 47 0 0 1 100 53" fill="none" stroke="#dc6450" strokeWidth="11" />
    <path d="M100 56A47 47 0 0 1 57 100" fill="none" stroke="#ecd048" strokeWidth="11" />
    <path id="ringText" d="M6 58A47 47 0 0 0 44 100" fill="none" />
    <text fill="#fff" fontFamily={NUM} fontSize="8"><textPath href="#ringText">www.9m8.cn</textPath></text>
    <path d="M45 2H61V16H65V40H71V62H65V92H41V62H35V40H41V16H45Z" fill="#ecd048" />
    <circle cx="53" cy="9" r="3.5" fill="#7fabd9" />
    <path d="M39 46H67M39 60H67M53 34V58M43 72H63M53 72V92" stroke="#7fabd9" strokeWidth="2.5" />
  </SBannerLogo>
)

const SideStrip = () => (
  <SSideBar>
    {sideIcons.map((icon, index) => (icon === 'rule'
      ? <SSideRule key={index} />
      : <SSideItem key={index}>{icon}</SSideItem>))}
    {sideLabels.map(label => {
      const cjk = !/^[0-9N]+$/.test(label)
      return label === '日'
        ? <SSidePressed key={label} $cjk>{label}</SSidePressed>
        : <SSideItem key={label} $cjk={cjk}>{label}</SSideItem>
    })}
  </SSideBar>
)

const tabsTop = [['指标', 45], ['窗口', 47], ['MACD', 64], ['VOL-TDX', 86], ['CCI', 44], ['趋势动力', 84], ['主力监控', 84], ['私募主图', 84], ['MA2', 46], ['测试主图', 84], ['测试幅图A', 94], ['测试幅图B', 97], ['更多', 47], ['设置', 48, '#30e8e8']]
const tabsBottom = [['扩展∧', 61], ['关联报价', 84], ['资金分布', 84], ['综合资讯', 84, YELLOW], ['行业资讯', 84, YELLOW], ['互动问答', 84, YELLOW], ['新用户福利专享', 137]]

const App = () => (
  <SPage>
    <GlobalStyle />
    <STitleBar>
      <SLogo viewBox="0 0 26 26">
        <rect width="26" height="26" fill="#d82820" />
        <path d="M16 3L4 14L10 15L5 24L22 10L15 9L21 3Z" fill="#fff" />
      </SLogo>
      <SAppName>通达信金融终端</SAppName>
      <SMenu $gap={36}>
        <SMenuItem>行情</SMenuItem><SMenuItem>市场</SMenuItem><SMenuItem>资讯</SMenuItem><SMenuItem>数据</SMenuItem>
        <SMenuItem>专题</SMenuItem><SMenuItem>发现<SDot /></SMenuItem><SMenuItem>交易</SMenuItem><SMenuItem>行业</SMenuItem>
        <SMenuItem>热点</SMenuItem><SMenuItem $mono>L1L2</SMenuItem>
      </SMenu>
      <SAlert $ml={270}>交易未登录</SAlert>
      <SAlert $ml={22}>中科三环</SAlert>
      <SMenu $gap={21} $auto $mr={19}>
        <SMenuItem>功能</SMenuItem><SMenuItem>版面</SMenuItem><SMenuItem>公式</SMenuItem><SMenuItem>选项</SMenuItem><SMenuItem>帮助</SMenuItem>
      </SMenu>
      <SClock><span>14:02:21</span><SMenuItem>周二</SMenuItem></SClock>
      <SWinButtons>
        <ChevronLeft size={26} strokeWidth={3.2} />
        <Minus size={24} strokeWidth={3.6} />
        <svg width="22" height="22" viewBox="0 0 22 22">
          <path d="M7 6V2H20V15H16M2 7H15V20H2Z" fill="none" stroke="#2c2c2c" strokeWidth="2.6" />
        </svg>
        <X size={26} strokeWidth={3.2} />
      </SWinButtons>
    </STitleBar>

    <SBody>
      <SLeftColumn>
        <SToolbar>
          <SPaneToggle><PanelGlyph /></SPaneToggle>
          <SPeriods>
            <SPeriod>分时</SPeriod><SPeriod>1分钟</SPeriod><SPeriod>5分钟</SPeriod><SPeriod>15分钟</SPeriod><SPeriod>30分钟</SPeriod>
            <SPeriod>60分钟</SPeriod><SPeriod $active>日线</SPeriod><SPeriod>周线</SPeriod><SPeriod>月线</SPeriod><SPeriod>多周期</SPeriod><SPeriod>更多 ›</SPeriod>
          </SPeriods>
          <SToolButtons>
            {['复权', '叠加', '统计', '画线', 'F10', '标记', '-自选', '返回'].map(label => <SToolButton key={label}>{label}</SToolButton>)}
          </SToolButtons>
        </SToolbar>

        <SPricePane>
          <SChartColumn>
            <SLegend>
              <SLegendTitle>中科三环(日线)</SLegendTitle>
              <SLegendToggle><Chevron /></SLegendToggle>
              <SLegendValue $color="#d8d8d8">MA5: 13.16<Arrow /></SLegendValue>
              <SLegendValue $color="#e8e800">MA10: 13.33<Arrow /></SLegendValue>
              <SLegendValue $color="#e000e0">MA20: 13.32<Arrow /></SLegendValue>
              <SLegendValue $color="#00e000">MA60: 13.77<Arrow /></SLegendValue>
              <SLegendValue $color="#b8b8b8">MA120: 15.76<Arrow /></SLegendValue>
              <SLegendValue $color="#0000c8">MA250: 14.21<Arrow /></SLegendValue>
              <SLegendEnd>
                <svg width="16" height="16" viewBox="0 0 16 16"><path d="M8 1L15 8L8 15L1 8Z" fill="none" stroke="#707070" strokeWidth="1.3" /></svg>
                <PanelGlyph />
              </SLegendEnd>
            </SLegend>
            <PriceChart />
          </SChartColumn>
          <PriceAxis />
        </SPricePane>

        <SLowerPane>
          <SChartColumn>
            <SLowerHeader>
              <Chevron />
              <SLowerName>长线骑牛</SLowerName>
              <SLegendValue $color="#d8d800" $mr={33}><SValueName>大趋势:</SValueName>15.21<Arrow /></SLegendValue>
              <SLegendValue $color="#00c800"><SValueName>底:</SValueName>-20.00</SLegendValue>
            </SLowerHeader>
            <LowerChart />
          </SChartColumn>
          <LowerAxis />
        </SLowerPane>

        <SDateAxis>
          <SDateCell $w={171} $line $pl={7}>2022年</SDateCell>
          <SDateCell $w={95}>7</SDateCell>
          <SDateCell $w={117} $box $pl={2}>2022/07/12/二</SDateCell>
          <SDateCell $w={58} $line />
          <SDateCell $w={296} $line>8</SDateCell>
          <SDateCell $w={270} $line>9</SDateCell>
          <SDateCell $w={200}>10</SDateCell>
        </SDateAxis>
        <STabRow $h={25}>
          {tabsTop.map(([label, w, color]) => <STab key={label} $w={w} $color={color}>{label}</STab>)}
        </STabRow>
        <STabRow $h={29} $last>
          {tabsBottom.map(([label, w, color]) => <STab key={label} $w={w} $color={color}>{label}</STab>)}
        </STabRow>
      </SLeftColumn>

      <SPanel>
        <SHead>
          <SNameRow>
            <SStockName>中科三环</SStockName>
            <SStockCode>000970</SStockCode>
            <SIndexTag><span>R</span><span>500</span></SIndexTag>
          </SNameRow>
          <SPriceRow>
            <span>12.92</span>
            <SChange>▼-0.06</SChange>
            <SChange>-0.46%</SChange>
          </SPriceRow>
        </SHead>
        <div>
          {bookSell.map((row, i) => <BookRow key={row[0]} row={row} yuan={i === 0} />)}
        </div>
        <SBookDivider />
        <SSection $pb={2}>
          {bookBuy.map(row => <BookRow key={row[0]} row={row} />)}
        </SSection>
        <SSection>
          {statsA.map(row => <StatRow key={row[3]} row={row} h={28.3} />)}
        </SSection>
        <SSection $pb={4} $pt={1}>
          {statsB.map(row => <StatRow key={row[3]} row={row} h={28.5} />)}
        </SSection>
        <SSection $pt={4} $pb={4}>
          {flows.map(row => (
            <SFlowRow key={row[0]}>
              <SLabel $size={23.5}>{row[0]}</SLabel>
              <SFlowBar $w={row[1]} />
              <SNum $right $color={GREEN} $weight={400}>{row[2]}<SUnit>{row[3]}</SUnit></SNum>
              <SNum $right $color={GREEN} $weight={400}>{row[4]}</SNum>
            </SFlowRow>
          ))}
        </SSection>
        <div>
          {ticks.map((row, i) => (
            <STickRow key={i}>
              <SNum $size={20}>{row[0]}</SNum>
              <SNum $size={20} $color={GREEN}>{row[1]}</SNum>
              <SNum $right $size={20} $color={YELLOW}>{row[2]}<SUnit>万</SUnit></SNum>
              <SSide $buy={row[3] === 'B'}>{row[3]}</SSide>
              <SNum $right $size={20} $color="#808080">{row[4]}</SNum>
            </STickRow>
          ))}
        </div>
      </SPanel>

      <SideStrip />
    </SBody>

    <SStatusBar>
      <SStatusIcon viewBox="0 0 20 22">
        <rect x="0.5" y="0.5" width="19" height="21" rx="2" fill="#f0a830" stroke="#c08020" />
        <rect x="5" y="5" width="10" height="12" fill="#fff0c0" />
      </SStatusIcon>
      <SStatusName $ml={4}>上证</SStatusName>
      <SStatusValue>3069.75</SStatusValue>
      <SStatusValue $ml={18}>-37.37</SStatusValue>
      <SStatusValue $ml={20}>-1.20%</SStatusValue>
      <SStatusValue $ml={21} $color="#101010">2120<SStatusUnit>亿</SStatusUnit></SStatusValue>
      <SStatusName $ml={26}>深证</SStatusName>
      <SStatusValue>10943.5</SStatusValue>
      <SStatusValue $ml={14}>-181.20</SStatusValue>
      <SStatusValue $ml={15}>-1.63%</SStatusValue>
      <SStatusValue $ml={22} $color="#101010">3051<SStatusUnit>亿</SStatusUnit></SStatusValue>
      <SStatusName $ml={27}>中小</SStatusName>
      <SStatusValue>7306.77</SStatusValue>
      <SStatusValue $ml={13}>-133.14</SStatusValue>
    </SStatusBar>

    <SImeBar>
      <SImeKey $w={20} $color="#8a0000" $bold>A</SImeKey>
      <SImeKey $w={71}>极品五笔</SImeKey>
      <SImeKey $w={20}>
        <svg width="14" height="14" viewBox="0 0 14 14"><path d="M9 1A6 6 0 1 1 2 10A7 7 0 0 0 9 1Z" fill="#000" /></svg>
      </SImeKey>
      <SImeKey $w={19}>·,</SImeKey>
      <SImeKey $w={20}>
        <svg width="17" height="13" viewBox="0 0 17 13"><rect width="17" height="13" fill="#909090" /><path d="M1 3h15M1 6.500h15M1 10h15" stroke="#e8e8e8" strokeDasharray="2 1" /></svg>
      </SImeKey>
    </SImeBar>

    <SBanner>
      <SBannerTitle>公式指标网</SBannerTitle>
      <BannerLogo />
      <SBannerUrl>www.9m8.cn</SBannerUrl>
    </SBanner>
  </SPage>
)

export default App
